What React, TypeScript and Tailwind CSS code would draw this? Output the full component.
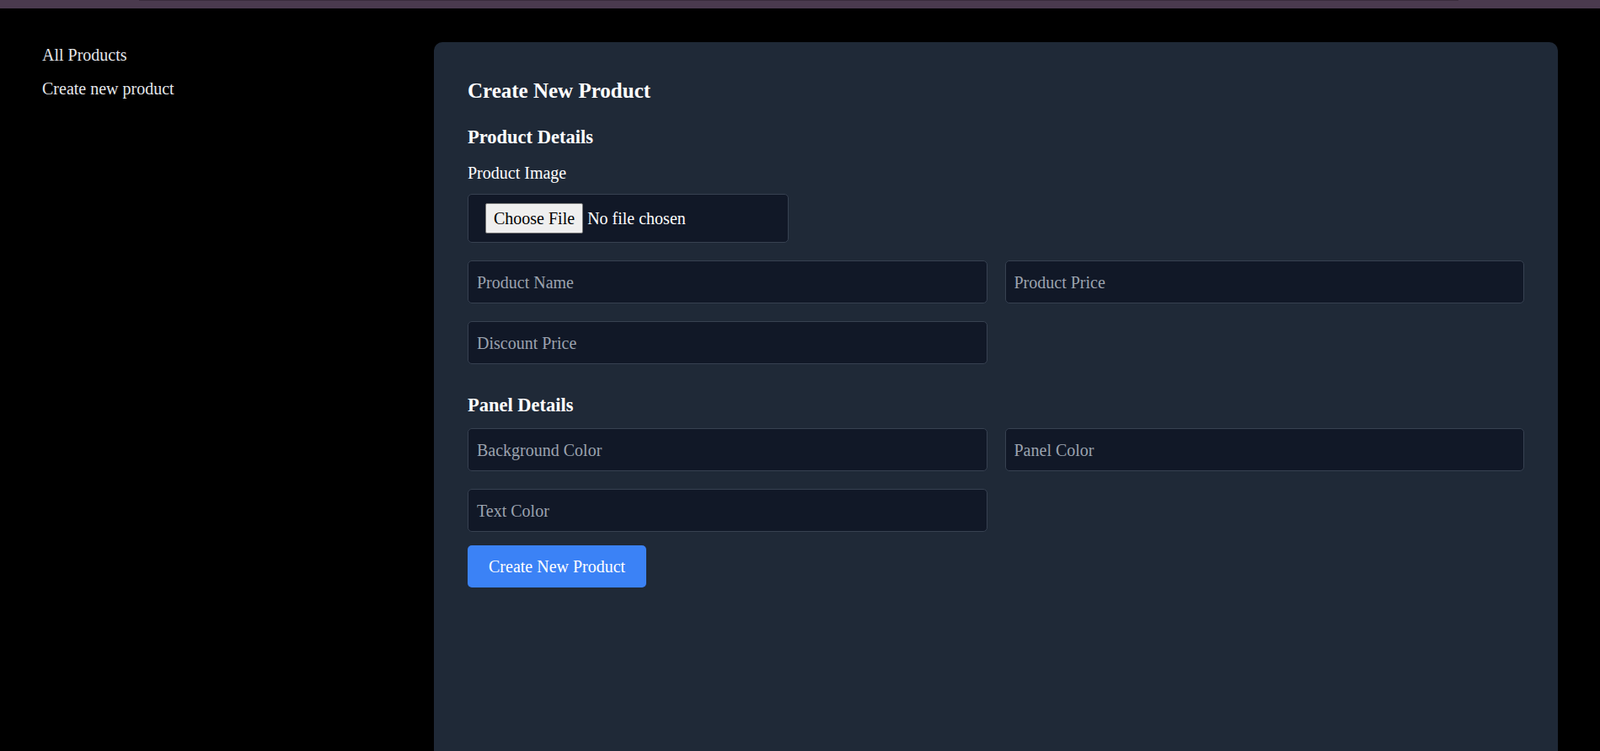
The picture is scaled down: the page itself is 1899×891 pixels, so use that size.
const sideLinks = [
    { name: "All Products", href: "#" },
    { name: "Create new product", href: "#" },
];

const fieldClass =
    "h-[51px] w-full px-[10px] pt-[2px] bg-[#111827] border border-[#374151] rounded-[5px] text-[20px] text-white placeholder:text-[#9ca3af] outline-none";

export default function App() {
    return (
        <div className="h-screen overflow-hidden bg-black font-['Liberation_Serif','Times_New_Roman',serif] text-white">
            {/* top strip */}
            <div className="h-[10px] bg-[#4a3a4e]">
                <div className="ml-[165px] w-[1566px] h-px bg-[#3a2c3d]" />
            </div>

            <div className="flex px-[50px] pt-[40px]">
                <nav className="w-[465px] shrink-0 flex flex-col gap-[10px]">
                    {sideLinks.map((item) => (
                        <a key={item.name} href={item.href} className="text-[20px] leading-[30px] text-gray-200">
                            {item.name}
                        </a>
                    ))}
                </nav>

                <main className="flex-1 min-h-[900px] bg-[#1f2937] rounded-t-[10px] p-[40px]">
                    <h2 className="text-[25px] leading-[35px] font-bold mb-[20px]">Create New Product</h2>

                    <h3 className="text-[22.5px] leading-[35px] font-bold mb-[10px]">Product Details</h3>
                    <label className="block text-[20px] leading-[30px] mb-[10px]">Product Image</label>
                    <input
                        type="file"
                        className="block w-[381px] h-[58px] py-[10px] px-[20px] bg-[#111827] border border-[#374151] rounded-[5px] text-white text-[20px] leading-[30px] file:mr-[5px] file:h-[36px] file:px-[9px] file:bg-[#efefef] file:text-black file:border file:border-[#767676] file:rounded-[2px]"
                    />

                    <div className="mt-[21px] grid grid-cols-2 gap-[21px]">
                        <input className={fieldClass} placeholder="Product Name" />
                        <input className={fieldClass} placeholder="Product Price" />
                        <input className={fieldClass} placeholder="Discount Price" />
                    </div>

                    <h3 className="mt-[31px] text-[22.5px] leading-[35px] font-bold mb-[10px]">Panel Details</h3>
                    <div className="grid grid-cols-2 gap-[21px]">
                        <input className={fieldClass} placeholder="Background Color" />
                        <input className={fieldClass} placeholder="Panel Color" />
                        <input className={fieldClass} placeholder="Text Color" />
                    </div>

                    <button className="mt-[16px] h-[50px] px-[25px] bg-[#3b82f6] rounded-[5px] text-[20px] text-white">
                        Create New Product
                    </button>
                </main>
            </div>
        </div>
    )
}
